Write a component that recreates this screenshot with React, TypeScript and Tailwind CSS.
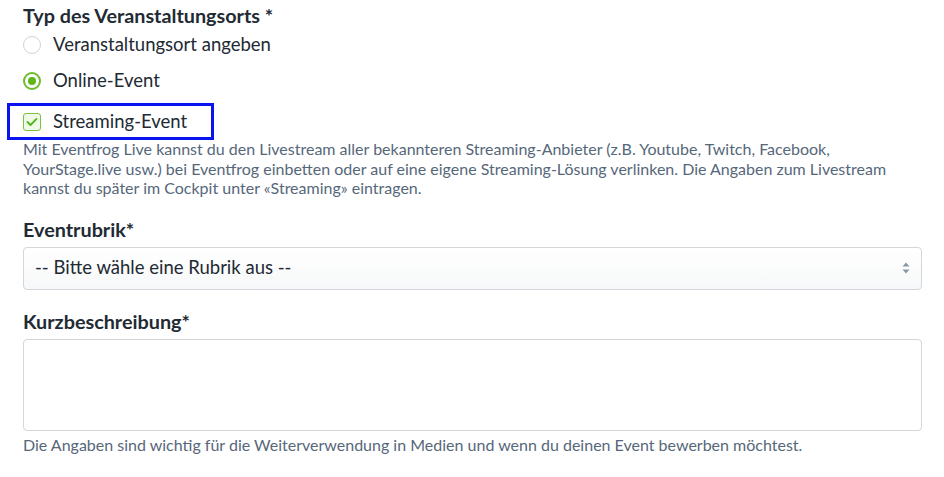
export default function App() {
  return (
    <div className="min-h-screen bg-white font-['Lato','Liberation_Sans',sans-serif] text-[#222a33]">
      <div className="pl-[23px] pr-[22px] pt-[3px]">
        <h3 className="text-[19.8px] font-bold leading-[24px]">Typ des Veranstaltungsorts *</h3>

        <label className="mt-[5px] flex h-[26px] items-center gap-[12px]">
          <span className="h-[18px] w-[18px] rounded-full border border-[#ccd2d8] bg-white" />
          <span className="text-[18.5px]">Veranstaltungsort angeben</span>
        </label>

        <label className="mt-[10px] flex h-[26px] items-center gap-[12px]">
          <span className="flex h-[18px] w-[18px] items-center justify-center rounded-full border-2 border-[#6cbb2a] bg-white">
            <span className="h-[8px] w-[8px] rounded-full bg-[#5cb814]" />
          </span>
          <span className="text-[18.5px]">Online-Event</span>
        </label>

        <div className="-ml-[16px] mt-[9px] flex h-[37px] w-[207px] items-center border-[3px] border-[#0a14f0] pl-[13px]">
          <label className="flex items-center gap-[12px]">
            <span className="flex h-[18px] w-[18px] items-center justify-center rounded-[3px] border border-[#7cc242] bg-[#f1f9e8]">
              <svg width="12" height="10" viewBox="0 0 12 10" fill="none">
                <path d="M1.5 5 L4.5 8 L10.5 1.8" stroke="#4db81a" strokeWidth="1.8" strokeLinecap="round" strokeLinejoin="round" />
              </svg>
            </span>
            <span className="text-[18.5px]">Streaming-Event</span>
          </label>
        </div>

        <p className="-mt-[1px] text-[16px] leading-[19.5px] text-[#56677a]">
          Mit Eventfrog Live kannst du den Livestream aller bekannteren Streaming-Anbieter (z.B. Youtube, Twitch, Facebook,
          <br />
          YourStage.live usw.) bei Eventfrog einbetten oder auf eine eigene Streaming-Lösung verlinken. Die Angaben zum Livestream
          <br />
          kannst du später im Cockpit unter «Streaming» eintragen.
        </p>

        <h3 className="mt-[19px] text-[19.8px] font-bold leading-[24px]">Eventrubrik*</h3>
        <div className="mt-[6px] flex h-[43px] items-center justify-between rounded-[4px] border border-[#d3d7db] bg-gradient-to-b from-white to-[#f7f8f9] pl-[11px] pr-[10px]">
          <span className="text-[18.5px]">-- Bitte wähle eine Rubrik aus --</span>
          <svg width="10" height="14" viewBox="0 0 10 14">
            <path d="M5 1.5 L8.5 5.5 H1.5 Z" fill="#8a97a4" />
            <path d="M5 12.5 L8.5 8.5 H1.5 Z" fill="#8a97a4" />
          </svg>
        </div>

        <h3 className="mt-[19px] text-[19.8px] font-bold leading-[24px]">Kurzbeschreibung*</h3>
        <div className="mt-[6px] h-[92px] rounded-[4px] border border-[#d3d7db] bg-white" />
        <p className="mt-[4px] text-[16px] leading-[20px] text-[#56677a]">
          Die Angaben sind wichtig für die Weiterverwendung in Medien und wenn du deinen Event bewerben möchtest.
        </p>
      </div>
    </div>
  );
}
